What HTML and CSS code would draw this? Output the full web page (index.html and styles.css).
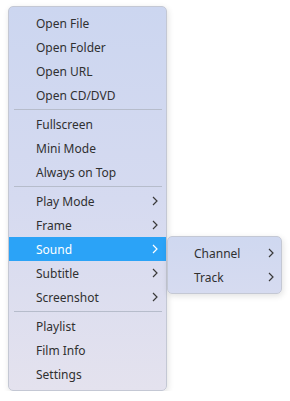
FILE: index.html
```html
<!DOCTYPE html>
<html>
<head>
    <title>Menu</title>
    <link rel="stylesheet" href="styles.css">
</head>
<body>
<div id="main">
    <ul class="menu">
        <li class="item">Open File</li>
        <li class="item">Open Folder</li>
        <li class="item">Open URL</li>
        <li class="item">Open CD/DVD</li>
        <li class="sep"></li>
        <li class="item">Fullscreen</li>
        <li class="item">Mini Mode</li>
        <li class="item">Always on Top</li>
        <li class="sep"></li>
        <li class="item">Play Mode <svg class="arrow" viewBox="0 0 6 10"><polyline points="1,1 5,5 1,9"/></svg></li>
        <li class="item">Frame <svg class="arrow" viewBox="0 0 6 10"><polyline points="1,1 5,5 1,9"/></svg></li>
        <li class="item active">Sound <svg class="arrow" viewBox="0 0 6 10"><polyline points="1,1 5,5 1,9"/></svg>
            <ul class="menu submenu">
                <li class="item">Channel <svg class="arrow" viewBox="0 0 6 10"><polyline points="1,1 5,5 1,9"/></svg></li>
                <li class="item">Track <svg class="arrow" viewBox="0 0 6 10"><polyline points="1,1 5,5 1,9"/></svg></li>
            </ul>
        </li>
        <li class="item">Subtitle <svg class="arrow" viewBox="0 0 6 10"><polyline points="1,1 5,5 1,9"/></svg></li>
        <li class="item">Screenshot <svg class="arrow" viewBox="0 0 6 10"><polyline points="1,1 5,5 1,9"/></svg></li>
        <li class="sep"></li>
        <li class="item">Playlist</li>
        <li class="item">Film Info</li>
        <li class="item">Settings</li>
    </ul>
</div>
</body>
</html>
```

FILE: styles.css
```css
* {
    margin: 0;
    padding: 0;
    box-sizing: border-box;
}

ul {
    list-style: none;
}

body {
    background: #fff;
    font-family: "Noto Sans", "Open Sans", sans-serif;
    font-size: 12px;
    color: #303030;
}

div#main {
    padding: 6px 0 0 8px;
}

ul.menu {
    width: 159px;
    padding: 4px 0;
    border: 1px solid #c4c8d4;
    border-radius: 5px;
    background: linear-gradient(to bottom, #ccd6f0, #d5daf0 50%, #e4e2ee);
    box-shadow: 1px 2px 6px rgba(0, 0, 0, 0.12);
}

li.item {
    position: relative;
    height: 24px;
    line-height: 26px;
    padding-left: 27px;
}

li.active {
    background: #2ba3f7;
    color: #fff;
}

li.sep {
    height: 5px;
    margin: 0 4px 0 5px;
    padding-top: 2px;
}

li.sep::after {
    content: "";
    display: block;
    height: 1px;
    background: #b6bccb;
}

svg.arrow {
    position: absolute;
    right: 8px;
    top: 7px;
    width: 6px;
    height: 10px;
    fill: none;
    stroke: #3a3a3a;
    stroke-width: 1.2;
}

li.active > svg.arrow {
    stroke: #fff;
}

ul.submenu {
    position: absolute;
    left: 158px;
    top: -1px;
    width: 115px;
    line-height: normal;
    color: #303030;
    background: linear-gradient(to bottom, #cfd8f0, #d6dbf0);
}

ul.submenu li.item {
    line-height: 26px;
    padding-left: 26px;
}

ul.submenu svg.arrow {
    right: 7px;
}
```
